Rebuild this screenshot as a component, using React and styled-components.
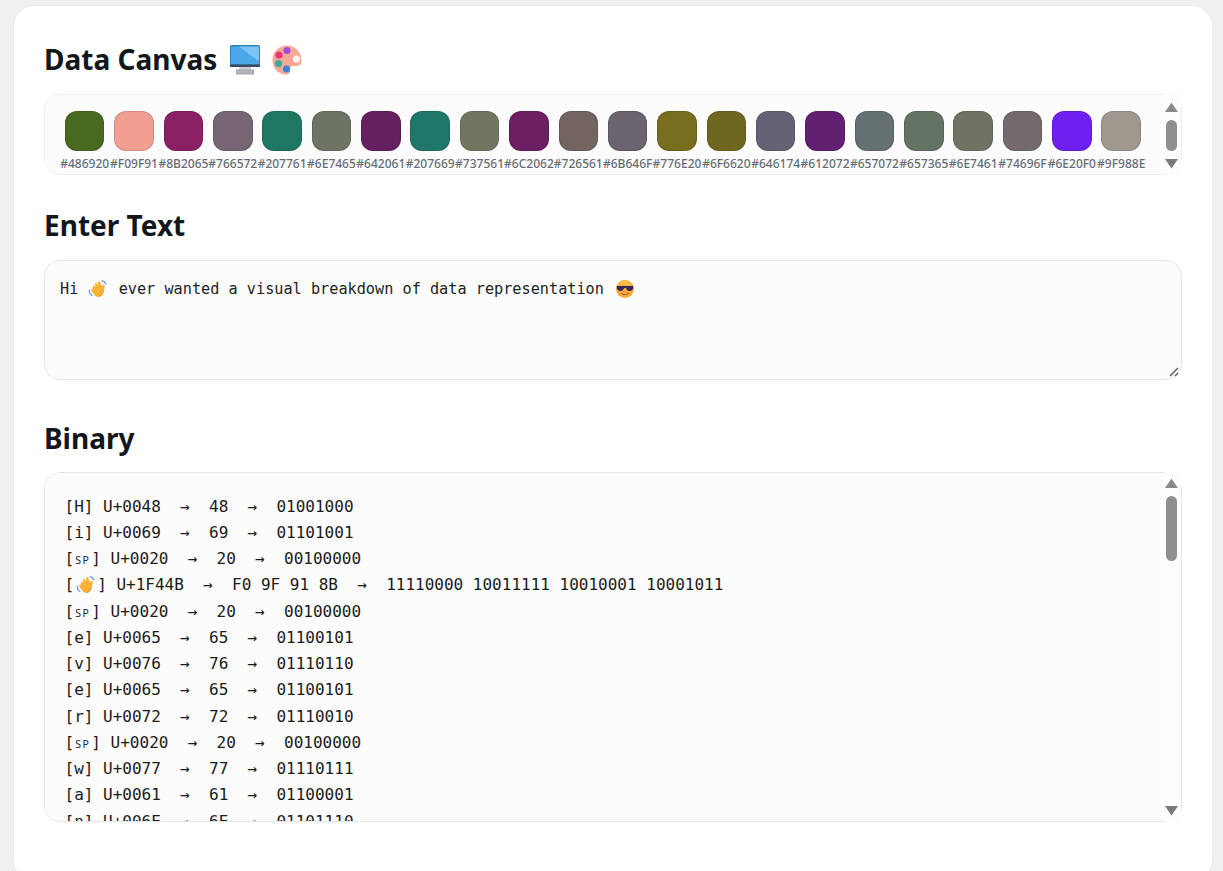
import React from 'react'
import styled, { createGlobalStyle } from 'styled-components'

const TEXT = 'Hi 👋 ever wanted a visual breakdown of data representation 😎'

const toHex = (bytes) => Array.from(bytes).map(b => b.toString(16).toUpperCase().padStart(2, '0'))

const getColors = (text) => {
    const hex = toHex(new TextEncoder().encode(text))
    const colors = []
    for (let i = 0; i + 2 < hex.length; i += 3) {
        colors.push('#' + hex.slice(i, i + 3).join(''))
    }
    return colors
}

const getRows = (text) => Array.from(text).map(char => {
    const bytes = new TextEncoder().encode(char)
    return {
        char,
        code: char.codePointAt(0).toString(16).toUpperCase().padStart(4, '0'),
        hex: toHex(bytes).join(' '),
        binary: Array.from(bytes).map(b => b.toString(2).padStart(8, '0')).join(' ')
    }
})

const ComputerIcon = () => (
    <TitleIcon viewBox="0 0 30 30">
        <rect x="9" y="21" width="12" height="5" fill="#c9c9d1" />
        <rect x="6" y="24.5" width="18" height="5" rx="0.5" fill="#a9a9b2" />
        <path d="M7 27h16" stroke="#d6d6dc" strokeWidth="1" strokeDasharray="1 1" />
        <rect x="0" y="0" width="30" height="22" rx="1.5" fill="#2c7fb8" />
        <path d="M1 1.5h28v18H1z" fill="#4aa9e6" />
        <path d="M9 1.5h20v15z" fill="#7cc4f5" />
        <path d="M0 19.5h30V20.5a1.5 1.5 0 0 1-1.5 1.5h-27A1.5 1.5 0 0 1 0 20.5z" fill="#3b4a63" />
    </TitleIcon>
)

const PaletteIcon = () => (
    <TitleIcon viewBox="0 0 30 30">
        <path d="M15 0.5C7 0.5 0.5 7 0.5 15S6 29.5 13.5 29.5c3.5 0 5-2 4.5-4.5-.4-2.2.6-4 3-4h3.5c3 0 5-2 5-5C29.5 6.5 23 .5 15 .5z" fill="#f6a996" />
        <path d="M24.5 10.5a3.6 3.6 0 1 0 .01 0z" fill="#fdf3ee" />
        <circle cx="15" cy="5.5" r="3.6" fill="#a44ad9" />
        <circle cx="7" cy="10" r="3.6" fill="#e8377f" />
        <circle cx="6.5" cy="18.5" r="3.6" fill="#39ab9c" />
        <circle cx="14.5" cy="24" r="3.6" fill="#3f83d8" />
    </TitleIcon>
)

const WaveIcon = () => (
    <GlyphIcon viewBox="0 0 20 18" $width={20} $margin={1}>
        <path d="M1.5 10.5c-.5 2 .5 4 2.5 5" stroke="#6d9bd8" strokeWidth="1.3" fill="none" strokeLinecap="round" />
        <path d="M14 .8c2 .2 3.2 1.3 3.8 3" stroke="#6d9bd8" strokeWidth="1.3" fill="none" strokeLinecap="round" />
        <path d="M5 7.5c-.8-1.2.6-2.4 1.7-1.4L8 7.4 7 4.6c-.5-1.4 1.2-2.2 2-1l1.4 2.2-.5-3c-.2-1.5 1.7-2 2.3-.6l1.9 4.4c.4-1 1-2.1 2-1.7 1 .4.7 1.5.4 2.5-.5 2-.5 3.5-1 5.1C14.8 15 12 17.5 9 16.6 6.8 16 5.8 14.2 4.9 12.8L3.3 10.2c-.8-1.3.8-2.4 1.8-1.3z" fill="#f9b133" />
        <path d="M9 16.6c3 .9 5.8-1.6 6.5-4.1.2-.7.3-1.4.4-2.1-1 2.6-3.5 5.6-6.9 6.2z" fill="#ea8f24" />
    </GlyphIcon>
)

const CoolIcon = () => (
    <GlyphIcon viewBox="0 0 18 18" $width={18} $margin={2.5}>
        <circle cx="9" cy="9" r="9" fill="#f8a93a" />
        <path d="M9 0a9 9 0 0 1 8 5H1a9 9 0 0 1 8-5z" fill="#fbbd4a" />
        <path d="M.8 6h16.4v1.2c0 2.3-1.4 3.8-3.5 3.8-2 0-3.3-1.2-3.7-3H8c-.4 1.8-1.7 3-3.7 3C2.2 11 .8 9.5.8 7.2z" fill="#35285c" />
        <path d="M5.5 13.4c2 1.5 5 1.5 7 0" stroke="#b5532a" strokeWidth="1.1" fill="none" strokeLinecap="round" />
    </GlyphIcon>
)

const Emoji = ({ char }) => {
    if (char === '👋') return <WaveIcon />
    if (char === '😎') return <CoolIcon />
    return char
}

const ScrollRail = ({ top, thumb }) => (
    <Rail $top={top}>
        <RailArrow viewBox="0 0 13 10"><path d="M6.5 0.5L13 10H0z" fill="#8a8a8a" /></RailArrow>
        <RailThumb $height={thumb} />
        <RailSpacer />
        <RailArrow viewBox="0 0 13 10"><path d="M0 0H13L6.5 9.5z" fill="#7a7a7a" /></RailArrow>
    </Rail>
)

const BinaryChar = ({ row }) => {
    if (row.char === ' ') return <SpaceMark>SP</SpaceMark>
    if (row.char === '👋' || row.char === '😎') return <EmojiSlot><Emoji char={row.char} /></EmojiSlot>
    return row.char
}

export default function App() {
    return (
        <>
            <GlobalStyle />
            <Card>
                <Title>
                    <span>Data Canvas</span>
                    <ComputerIcon />
                    <PaletteIcon />
                </Title>
                <SwatchFrame>
                    <SwatchBox>
                        <SwatchRow>
                            {getColors(TEXT).map((color, i) => (
                                <SwatchItem key={i}>
                                    <Swatch $color={color} />
                                    <SwatchLabel>{color}</SwatchLabel>
                                </SwatchItem>
                            ))}
                        </SwatchRow>
                    </SwatchBox>
                    <ScrollRail top={8} thumb={31} />
                </SwatchFrame>
                <Title>Enter Text</Title>
                <TextBox role="textbox" contentEditable suppressContentEditableWarning spellCheck={false}>
                    {Array.from(TEXT).map((char, i) => <Emoji key={i} char={char} />)}
                </TextBox>
                <Title>Binary</Title>
                <BinaryFrame>
                    <BinaryBox>
                        {getRows(TEXT).map((row, i) => (
                            <div key={i}>
                                [<BinaryChar row={row} />] U+{row.code}  →  {row.hex}  →  {row.binary}
                            </div>
                        ))}
                    </BinaryBox>
                    <ScrollRail top={6} thumb={65} />
                </BinaryFrame>
            </Card>
        </>
    )
}

const GlobalStyle = createGlobalStyle`
    html, body {
        margin: 0;
        height: 100%;
        overflow: hidden;
        background: #f0f0f0;
    }
`

const Card = styled.div`
    box-sizing: border-box;
    width: 1198px;
    height: 874px;
    margin: 6px 0 0 14px;
    padding: 29px 30px 30px;
    background: #fff;
    border-radius: 20px;
    box-shadow: 0 0 2px rgba(0, 0, 0, 0.08);
    font-family: "Noto Sans", sans-serif;
`

const Title = styled.h2`
    display: flex;
    align-items: center;
    margin: 0 0 10px;
    height: 49px;
    font-size: 28px;
    line-height: 49px;
    font-weight: 700;
    color: #12171c;
`

const TitleIcon = styled.svg`
    width: 30px;
    height: 30px;
    margin-left: 12px;
    &:first-of-type {
        margin-left: 13px;
    }
`

const GlyphIcon = styled.svg`
    display: inline-block;
    width: ${props => props.$width}px;
    height: 18px;
    margin: 0 ${props => props.$margin}px;
    vertical-align: -4px;
`

const SwatchFrame = styled.div`
    position: relative;
    margin-bottom: 26px;
`

const SwatchBox = styled.div`
    box-sizing: border-box;
    height: 81px;
    background: #fcfcfc;
    border: 1px solid #eee;
    border-radius: 16px;
    overflow-y: scroll;
    scrollbar-width: none;
`

const SwatchRow = styled.div`
    display: flex;
    flex-wrap: wrap;
    padding: 16px 15px 4px;
`

const SwatchItem = styled.div`
    display: flex;
    flex-direction: column;
    align-items: center;
    gap: 4px;
    width: 49.37px;
`

const Swatch = styled.div`
    box-sizing: border-box;
    width: 39.5px;
    height: 39.5px;
    border-radius: 12px;
    border: 1px solid rgba(0, 0, 0, 0.12);
    background: ${props => props.$color};
`

const SwatchLabel = styled.span`
    font-size: 12px;
    line-height: 17px;
    font-weight: 500;
    white-space: nowrap;
    color: #666c75;
`

const Rail = styled.div`
    position: absolute;
    top: 0;
    right: 1px;
    bottom: 0;
    box-sizing: border-box;
    width: 16px;
    padding: ${props => props.$top}px 3px 6px 0;
    display: flex;
    flex-direction: column;
    align-items: center;
    background: #fdfdfd;
`

const RailArrow = styled.svg`
    flex: none;
    width: 13px;
    height: 10px;
`

const RailThumb = styled.div`
    flex: none;
    width: 11px;
    height: ${props => props.$height}px;
    margin-top: 8px;
    border-radius: 6px;
    background: #8f8f8f;
`

const RailSpacer = styled.div`
    flex: 1;
`

const TextBox = styled.div`
    box-sizing: border-box;
    height: 120px;
    margin-bottom: 34px;
    padding: 16px 15px 15px;
    background: #fcfcfc;
    border: 1px solid #e6e6e6;
    border-radius: 16px;
    outline: none;
    overflow: auto;
    resize: vertical;
    scrollbar-width: none;
    font-family: "DejaVu Sans Mono", monospace;
    font-size: 15.2px;
    line-height: 24px;
    color: #222;
    &::-webkit-resizer {
        background-repeat: no-repeat;
        background-position: center;
        background-image: url("data:image/svg+xml,%3Csvg xmlns='http://www.w3.org/2000/svg' width='10' height='10'%3E%3Cpath d='M1 9L9 1M6 9L9 6' stroke='%23555' stroke-width='1.3'/%3E%3C/svg%3E");
    }
`

const BinaryFrame = styled.div`
    position: relative;
    margin-top: -1px;
`

const BinaryBox = styled.div`
    box-sizing: border-box;
    height: 350px;
    padding: 20.7px 20px 20px 19.5px;
    background: #fcfcfc;
    border: 1px solid #e6e6e6;
    border-radius: 16px;
    overflow-y: scroll;
    scrollbar-width: none;
    white-space: pre;
    font-family: "DejaVu Sans Mono", monospace;
    font-size: 16px;
    line-height: 26.25px;
    color: #1a1a1a;
`

const SpaceMark = styled.span`
    display: inline-block;
    width: 17.2px;
    text-align: center;
    font-family: "Noto Sans", sans-serif;
    font-size: 10.5px;
    letter-spacing: 1.5px;
    line-height: 1;
    color: #222;
`

const EmojiSlot = styled.span`
    display: inline-block;
    width: 23px;
    text-align: center;
    line-height: 1;
`
